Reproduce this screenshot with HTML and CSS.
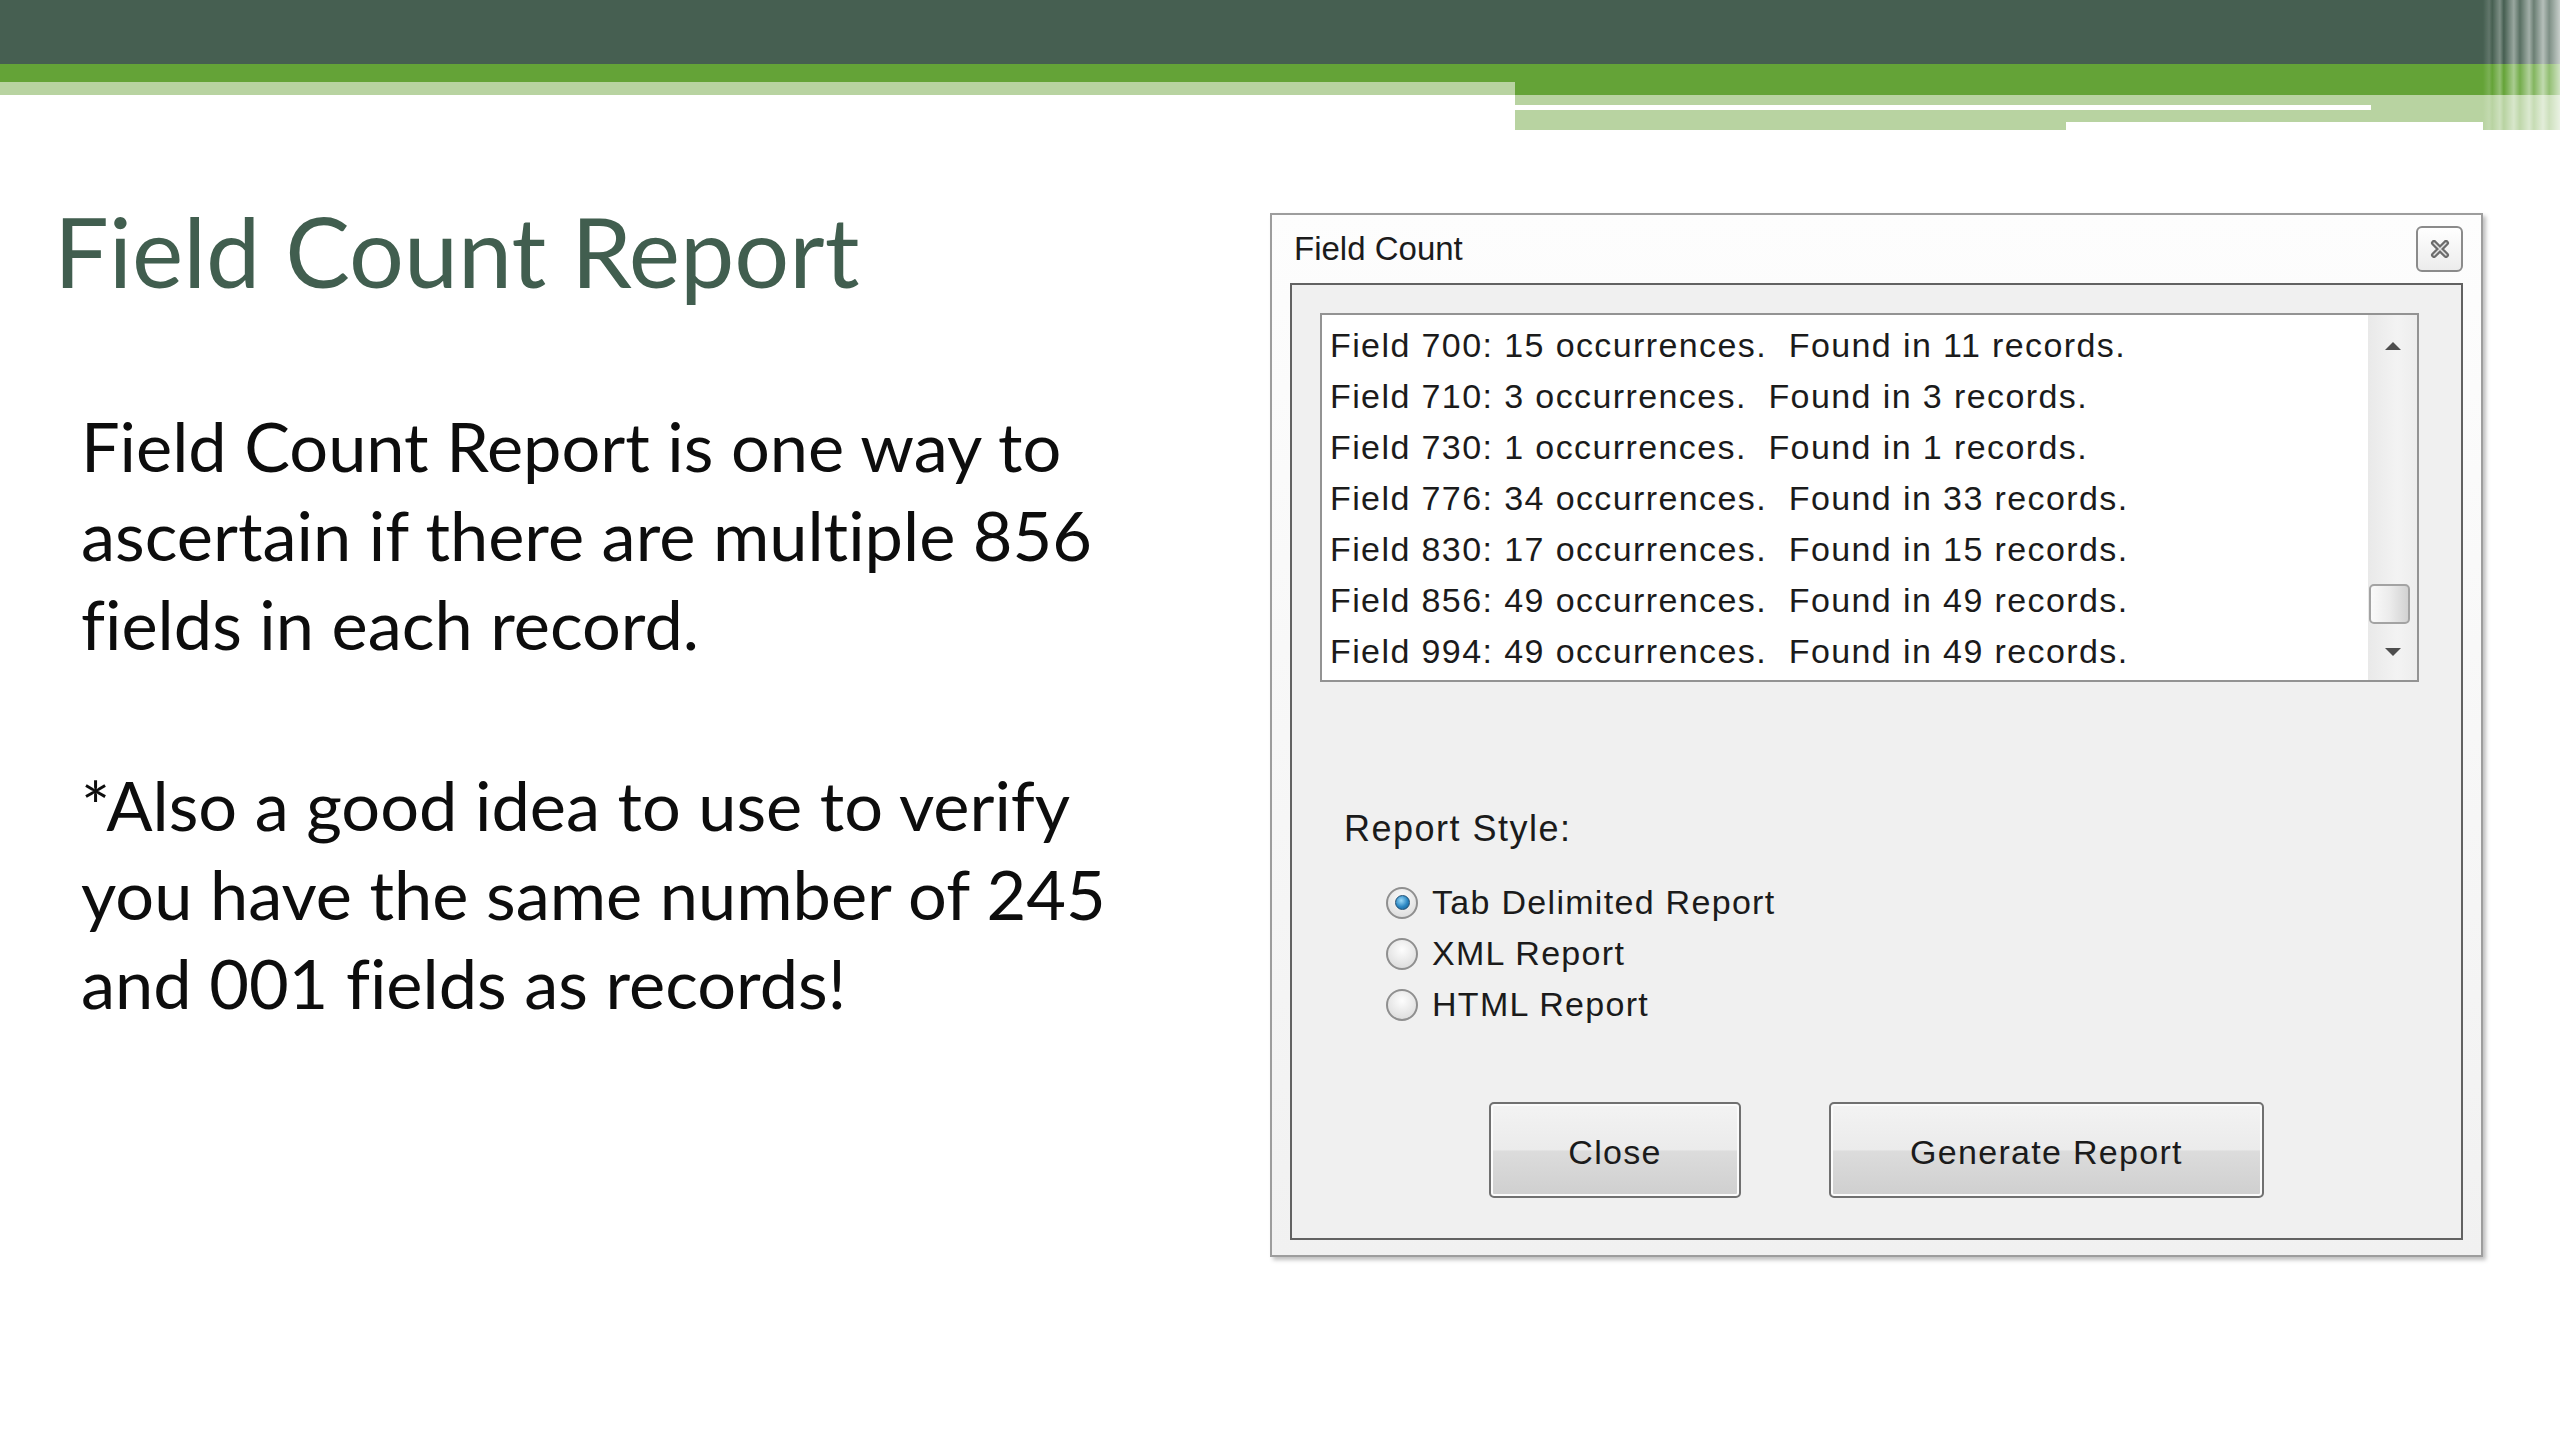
FILE: index.html
```html
<!DOCTYPE html>
<html lang="en">
<head>
  <title>Field Count Report</title>
  <link rel="stylesheet" href="styles.css">
</head>
<body>
  <header class="banner">
    <div class="band-left">
      <div class="dark"></div>
      <div class="bright"></div>
      <div class="pale"></div>
    </div>
    <div class="band-right">
      <div class="dark"></div>
      <div class="bright bright-tall"></div>
      <div class="pale pale-thin"></div>
      <div class="line-row">
        <div class="white-line"></div>
        <div class="line-rest"></div>
      </div>
      <div class="bottom-row">
        <div class="pale pale-deep"></div>
        <div class="pale pale-shallow"></div>
      </div>
    </div>
    <div class="band-edge"></div>
  </header>

  <div class="slide">
    <div class="text-col">
      <h1 class="title">Field Count Report</h1>
      <div class="body-copy">
        <p>Field Count Report is one way to<br>ascertain if there are multiple 856<br>fields in each record.</p>
        <p>*Also a good idea to use to verify<br>you have the same number of 245<br>and 001 fields as records!</p>
      </div>
    </div>

    <div class="dialog">
      <div class="titlebar">
        <span class="dialog-title">Field Count</span>
        <div class="close-x">
          <svg width="20" height="18" viewBox="0 0 20 18">
            <path d="M4 3 L16 15 M16 3 L4 15" stroke="#6d6d6d" stroke-width="6" stroke-linecap="round"/>
            <path d="M4 3 L16 15 M16 3 L4 15" stroke="#e4e4e4" stroke-width="1.5" stroke-linecap="round"/>
          </svg>
        </div>
      </div>

      <div class="panel">
        <div class="listbox">
          <div class="list-lines">
            <div class="line">Field 700: 15 occurrences.  Found in 11 records.</div>
            <div class="line">Field 710: 3 occurrences.  Found in 3 records.</div>
            <div class="line">Field 730: 1 occurrences.  Found in 1 records.</div>
            <div class="line">Field 776: 34 occurrences.  Found in 33 records.</div>
            <div class="line">Field 830: 17 occurrences.  Found in 15 records.</div>
            <div class="line">Field 856: 49 occurrences.  Found in 49 records.</div>
            <div class="line">Field 994: 49 occurrences.  Found in 49 records.</div>
          </div>
          <div class="scrollbar">
            <div class="scroll-up"><span class="arrow-up"></span></div>
            <div class="scroll-track"><div class="thumb"></div></div>
            <div class="scroll-down"><span class="arrow-down"></span></div>
          </div>
        </div>

        <div class="report-label">Report Style:</div>
        <div class="options">
          <div class="option"><span class="radio"><span class="dot"></span></span>Tab Delimited Report</div>
          <div class="option"><span class="radio"></span>XML Report</div>
          <div class="option"><span class="radio"></span>HTML Report</div>
        </div>

        <div class="buttons">
          <button class="btn btn-close">Close</button>
          <button class="btn btn-generate">Generate Report</button>
        </div>
      </div>
    </div>
  </div>
</body>
</html>
```

FILE: styles.css
```css
body {
  margin: 0;
  width: 2560px;
  height: 1440px;
  overflow: hidden;
  background: #fff;
  font-family: Lato, "Open Sans", sans-serif;
}

/* top banner */
.banner {
  display: flex;
  height: 130px;
}
.band-left {
  width: 1515px;
}
.band-right {
  width: 968px;
}
.band-edge {
  flex: 1;
  background:
    linear-gradient(to right, rgba(255,255,255,0) 0, rgba(255,255,255,.15) 8%, rgba(255,255,255,0) 12%, rgba(255,255,255,.3) 22%, rgba(255,255,255,0) 27%, rgba(255,255,255,.45) 40%, rgba(255,255,255,.1) 48%, rgba(255,255,255,.5) 60%, rgba(255,255,255,.2) 66%, rgba(255,255,255,.6) 78%, rgba(255,255,255,.3) 86%, rgba(255,255,255,.7) 100%),
    linear-gradient(to bottom, #465f51 0, #465f51 64px, #64a337 64px, #64a337 95px, #b8d3a1 95px, #b8d3a1 130px);
}
.dark {
  height: 64px;
  background: #465f51;
}
.bright {
  height: 18px;
  background: #64a337;
}
.bright-tall {
  height: 31px;
}
.pale {
  height: 13px;
  background: #b8d3a1;
}
.pale-thin {
  height: 10px;
}
.line-row {
  display: flex;
  height: 5px;
}
.white-line {
  width: 856px;
  background: #fff;
}
.line-rest {
  flex: 1;
  background: #b8d3a1;
}
.bottom-row {
  display: flex;
  align-items: flex-start;
}
.pale-deep {
  width: 551px;
  height: 20px;
}
.pale-shallow {
  flex: 1;
  height: 12px;
}

/* slide content */
.slide {
  display: flex;
  padding-left: 54px;
}
.text-col {
  width: 1216px;
}
.title {
  margin: 61px 0 0;
  font-size: 97px;
  line-height: 120px;
  font-weight: 400;
  color: #415e4f;
  font-variant-ligatures: none;
}
.body-copy {
  margin: 90px 0 0 27px;
  font-size: 68.5px;
  line-height: 89px;
  color: #0d0d0d;
  font-variant-ligatures: none;
}
.body-copy p {
  margin: 0;
}
.body-copy p + p {
  margin-top: 92px;
}

/* dialog */
.dialog {
  margin-top: 83px;
  width: 1213px;
  height: 1044px;
  box-sizing: border-box;
  border: 2px solid #9d9d9d;
  box-shadow: 3px 3px 4px rgba(0,0,0,.25);
  background: linear-gradient(#fdfdfd, #f1f1f1);
  padding: 0 18px 15px 18px;
  display: flex;
  flex-direction: column;
  font-family: "Liberation Sans", Arial, sans-serif;
  color: #1b1b1b;
}
.titlebar {
  height: 68px;
  display: flex;
  align-items: center;
  justify-content: space-between;
}
.dialog-title {
  padding-left: 4px;
  font-size: 33px;
}
.close-x {
  width: 47px;
  height: 46px;
  box-sizing: border-box;
  border: 2px solid #8b8b8b;
  border-radius: 6px;
  background: linear-gradient(#fff, #ececec);
  display: flex;
  align-items: center;
  justify-content: center;
}
.panel {
  flex: 1;
  border: 2px solid #626262;
  background: #f0f0f0;
  padding: 28px 0 0 28px;
}
.listbox {
  width: 1099px;
  height: 369px;
  box-sizing: border-box;
  border: 2px solid #939393;
  background: #fff;
  display: flex;
}
.list-lines {
  flex: 1;
  padding: 5px 0 0 8px;
  font-size: 34px;
  line-height: 51px;
  letter-spacing: 1.4px;
}
.line {
  white-space: pre;
}
.scrollbar {
  width: 49px;
  display: flex;
  flex-direction: column;
  background: linear-gradient(to right, #e9e9e9, #f3f3f3 60%, #ededed);
}
.scroll-up {
  height: 62px;
  display: flex;
  align-items: center;
  justify-content: center;
}
.scroll-down {
  height: 56px;
  display: flex;
  align-items: center;
  justify-content: center;
}
.arrow-up {
  border-left: 8px solid transparent;
  border-right: 8px solid transparent;
  border-bottom: 8px solid #4e4e4e;
}
.arrow-down {
  border-left: 8px solid transparent;
  border-right: 8px solid transparent;
  border-top: 8px solid #4e4e4e;
}
.scroll-track {
  flex: 1;
  display: flex;
  flex-direction: column;
  justify-content: flex-end;
}
.thumb {
  width: 41px;
  height: 40px;
  margin-left: 1px;
  box-sizing: border-box;
  border: 2px solid #a3a3a3;
  border-radius: 5px;
  background: linear-gradient(to right, #fafafa, #ececec 50%, #d2d2d2);
}

.report-label {
  margin: 125px 0 0 24px;
  font-size: 36px;
  line-height: 44px;
  letter-spacing: 1.5px;
}
.options {
  margin: 26px 0 0 66px;
}
.option {
  display: flex;
  align-items: center;
  height: 51px;
  font-size: 34px;
  letter-spacing: 1.3px;
}
.radio {
  width: 32px;
  height: 32px;
  margin-right: 14px;
  box-sizing: border-box;
  border-radius: 50%;
  border: 2px solid #8f8f8f;
  background: radial-gradient(circle at 50% 35%, #fdfdfd, #d6d6d6);
  display: flex;
  align-items: center;
  justify-content: center;
}
.dot {
  width: 15px;
  height: 15px;
  box-sizing: border-box;
  border-radius: 50%;
  border: 1px solid #1e4f74;
  background: radial-gradient(circle at 40% 35%, #9ad9f8, #2a86c2 55%, #165a8c);
}

.buttons {
  display: flex;
  gap: 88px;
  margin: 72px 0 0 169px;
}
.btn {
  height: 96px;
  box-sizing: border-box;
  border: 2px solid #707070;
  border-radius: 5px;
  background: linear-gradient(#f3f3f3, #ebebeb 50%, #dcdcdc 51%, #cfcfcf);
  box-shadow: inset 0 0 0 2px #fbfbfb;
  font-family: "Liberation Sans", Arial, sans-serif;
  font-size: 34px;
  letter-spacing: 1.3px;
  color: #1b1b1b;
  padding: 4px 0 0;
}
.btn-close {
  width: 252px;
}
.btn-generate {
  width: 435px;
}
```
